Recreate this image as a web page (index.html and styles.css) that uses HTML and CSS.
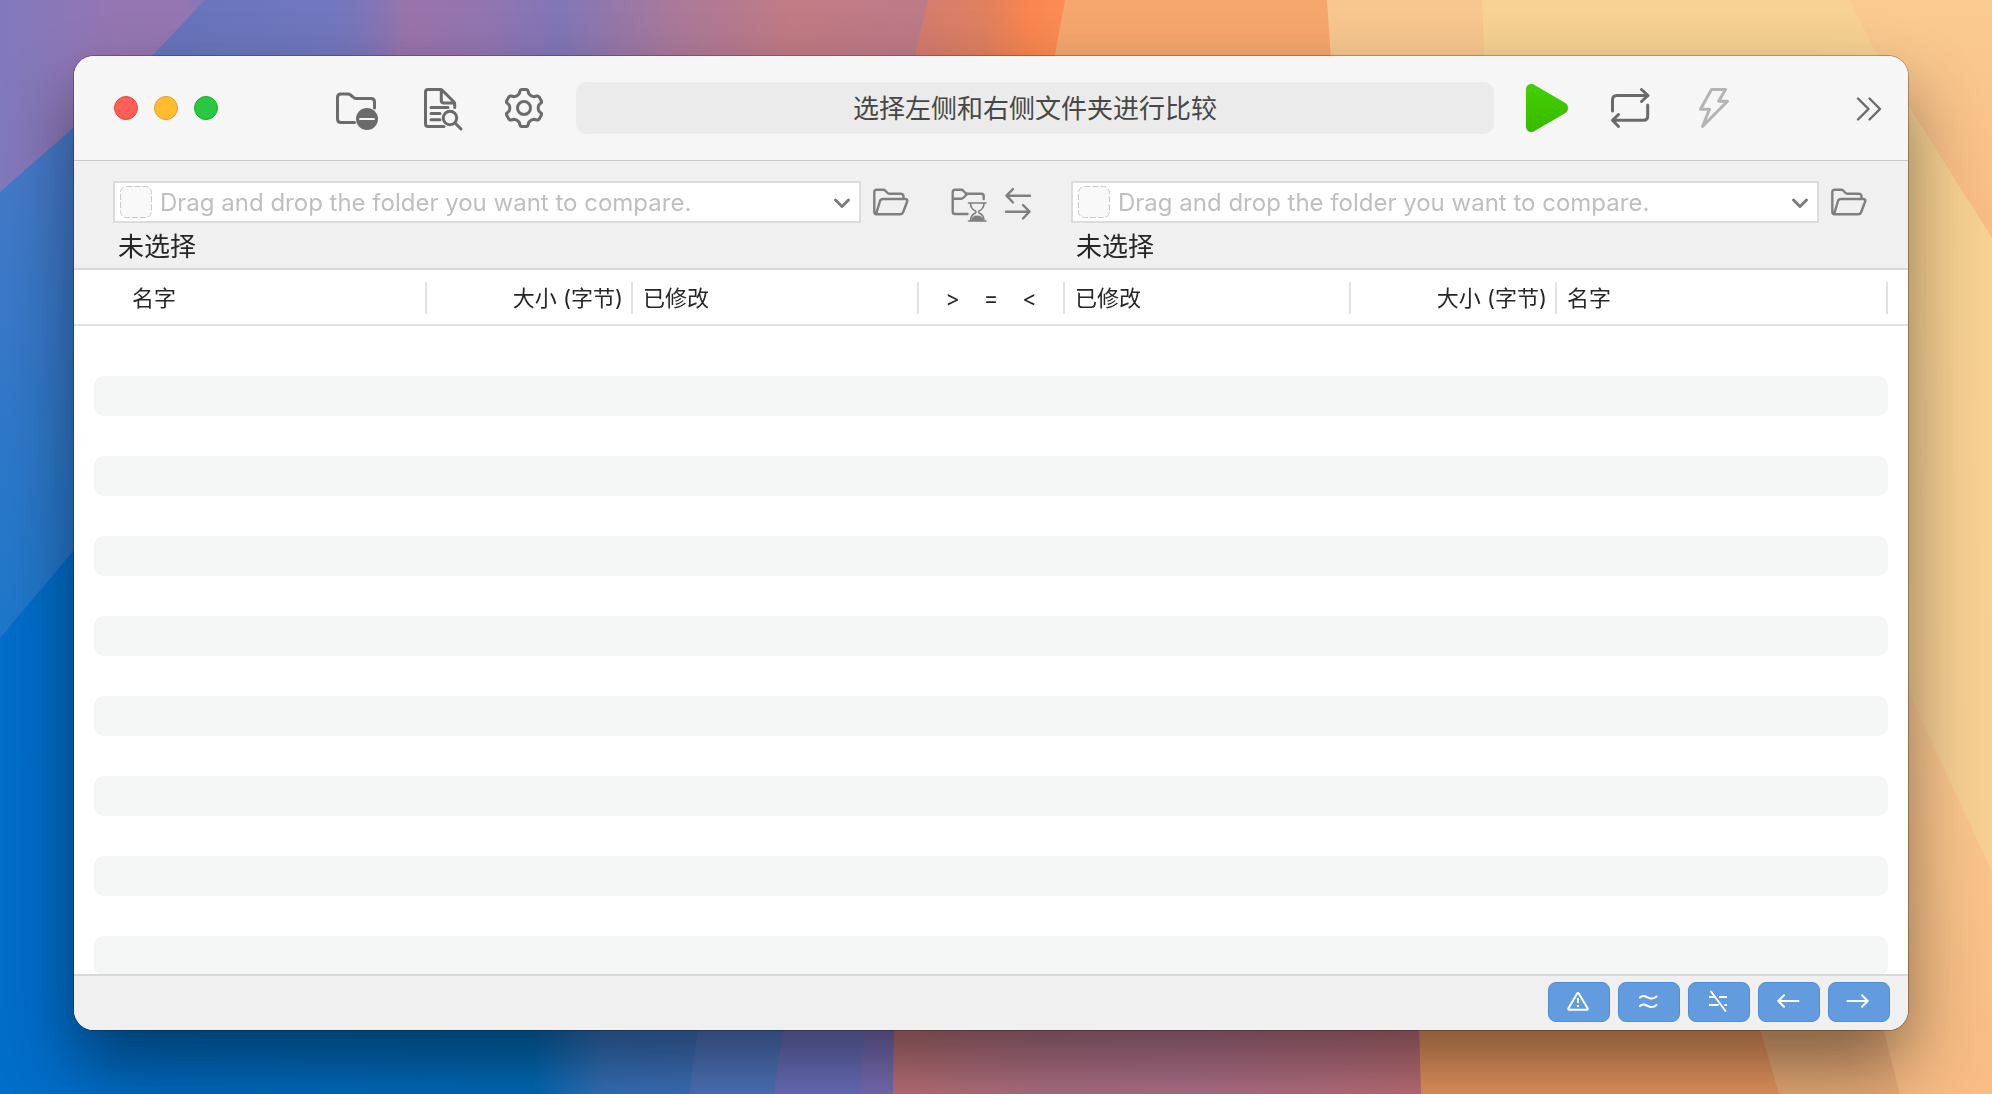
FILE: index.html
```html
<!DOCTYPE html>
<html lang="zh-CN">
<head>
<meta charset="utf-8">
<meta name="viewport" content="width=device-width, initial-scale=1">
<title>文件夹比较</title>
<link rel="stylesheet" href="styles.css">
</head>
<body>
<svg class="wallpaper" viewBox="0 0 1992 1094" preserveAspectRatio="none" aria-hidden="true">
  <defs>
    <linearGradient id="violet" gradientUnits="userSpaceOnUse" x1="0" y1="0" x2="930" y2="0">
      <stop offset="0" stop-color="#8079be"/><stop offset=".12" stop-color="#9576b2"/>
      <stop offset=".2" stop-color="#9576b2"/><stop offset=".23" stop-color="#7777bc"/><stop offset=".36" stop-color="#7b76ba"/>
      <stop offset=".44" stop-color="#9a74ab"/><stop offset=".52" stop-color="#9275b0"/>
      <stop offset=".6" stop-color="#8176b8"/><stop offset=".72" stop-color="#a9799b"/>
      <stop offset=".85" stop-color="#c17b84"/><stop offset="1" stop-color="#bd7a88"/>
    </linearGradient>
    <linearGradient id="indigo" gradientUnits="userSpaceOnUse" x1="150" y1="0" x2="400" y2="0">
      <stop offset="0" stop-color="#6674bb"/><stop offset=".7" stop-color="#7177be"/><stop offset="1" stop-color="#7177be" stop-opacity="0"/>
    </linearGradient>
    <linearGradient id="coral" gradientUnits="userSpaceOnUse" x1="910" y1="0" x2="1060" y2="0">
      <stop offset="0" stop-color="#d27b72"/><stop offset=".5" stop-color="#e0805f"/><stop offset=".8" stop-color="#fa8650"/><stop offset="1" stop-color="#fb8c55"/>
    </linearGradient>
    <linearGradient id="sky" x1="0" y1="0" x2="0" y2="1">
      <stop offset="0" stop-color="#4e7ac8"/><stop offset="1" stop-color="#1877cb"/>
    </linearGradient>
    <linearGradient id="ocean" gradientUnits="userSpaceOnUse" x1="0" y1="0" x2="900" y2="0">
      <stop offset="0" stop-color="#006ecb"/><stop offset=".59" stop-color="#006dbc"/><stop offset=".67" stop-color="#3673be"/>
      <stop offset="1" stop-color="#5270bd"/>
    </linearGradient>
    <linearGradient id="plum" gradientUnits="userSpaceOnUse" x1="890" y1="0" x2="1420" y2="0">
      <stop offset="0" stop-color="#c07378"/><stop offset=".3" stop-color="#b27389"/><stop offset=".6" stop-color="#b4738d"/><stop offset="1" stop-color="#c1717a"/>
    </linearGradient>
    <linearGradient id="sand" x1="0" y1="0" x2="0" y2="1">
      <stop offset="0" stop-color="#f7d292"/><stop offset="1" stop-color="#f8cf93"/>
    </linearGradient>
    <linearGradient id="peach" x1="0" y1="0" x2="0" y2="1">
      <stop offset="0" stop-color="#facb91"/><stop offset="1" stop-color="#f8bc84"/>
    </linearGradient>
  </defs>
  <rect width="1992" height="1094" fill="url(#violet)"/>
  <path d="M205 0H400V300H60L148 60z" fill="url(#indigo)"/>
  <path d="M0 192L74 127L150 60V700H0z" fill="url(#sky)"/>
  <path d="M0 638L74 550H900V1094H0z" fill="url(#ocean)"/>
  <path d="M702 1000H904V1094H689z" fill="#4f76c0"/>
  <path d="M787 1000H904V1094H774z" fill="#6c71bf"/>
  <path d="M866 1000H904V1094H860z" fill="#7a6fb8"/>
  <path d="M928 0H1070V547H913L914 60z" fill="url(#coral)"/>
  <path d="M901 500H1430V1094H893z" fill="url(#plum)"/>
  <path d="M1065 0H1340V600H1040L1054 60z" fill="#f6a76e"/>
  <path d="M1404 500H1790V1094H1421z" fill="#ea9860"/>
  <path d="M1327 0H1500V500H1360z" fill="#f8c78f"/>
  <path d="M1482 0H1992V900H1520z" fill="url(#sand)"/>
  <path d="M1850 0H1992V238L1908 105L1877 55z" fill="url(#peach)"/>
  <path d="M1740 960H1920V1094H1779z" fill="#eaad78"/>
  <path d="M1860 640L1908 690L1992 872V1094H1900L1876 1000z" fill="url(#peach)"/>
</svg>

<main class="window">
  <header class="toolbar">
    <div class="lights">
      <button class="light light-close" type="button" aria-label="关闭"></button>
      <button class="light light-minimize" type="button" aria-label="最小化"></button>
      <button class="light light-zoom" type="button" aria-label="缩放"></button>
    </div>
    <div class="tools">
      <button class="tool" type="button" aria-label="排除文件夹">
        <svg viewBox="0 0 48 48"><path d="M42.500 24V18Q42.500 14.500 39 14.500H24Q22.500 14.500 21 13L18.500 11Q17.300 10 16 10H9Q5.500 10 5.500 13.500V35Q5.500 38.500 9 38.500H22.500"/><circle class="solid" cx="35" cy="35" r="11"/><path class="cut" d="M28 35H42"/></svg>
      </button>
      <button class="tool" type="button" aria-label="查看报告">
        <svg viewBox="0 0 48 48"><path d="M28 42.500H12Q9.500 42.500 9.500 40V8Q9.500 5.500 12 5.500H24.500Q25.500 5.500 26.500 6.500L38 18Q38.700 18.700 38.700 20V23.500M25.300 6V16.500Q25.300 19 27.800 19H38M15 23.500H32M15 29.500H24M15 35.700H24"/><circle cx="34" cy="34" r="6.700"/><path d="M39 39L45 45"/></svg>
      </button>
      <button class="tool" type="button" aria-label="设置">
        <svg viewBox="0 0 48 48"><path transform="translate(24 24)" d="M-4-17Q-3.600-18.500-2.500-18.500H2.500Q3.600-18.500 4-17L4.800-14.300Q6.800-11.800 9.900-11.300L12.700-12Q14.300-12.300 15-11.200L17.400-7Q18-5.700 16.800-4.800L14.800-3Q13.600 0 14.800 3L16.800 4.800Q18 5.700 17.400 7L15 11.200Q14.300 12.300 12.700 12L9.900 11.300Q6.800 11.800 4.800 14.300L4 17Q3.600 18.500 2.500 18.500H-2.500Q-3.600 18.500-4 17L-4.800 14.300Q-6.800 11.800-9.900 11.300L-12.700 12Q-14.300 12.300-15 11.200L-17.400 7Q-18 5.700-16.800 4.800L-14.800 3Q-13.600 0-14.800-3L-16.800-4.800Q-18-5.700-17.400-7L-15-11.200Q-14.300-12.300-12.700-12L-9.900-11.300Q-6.800-11.800-4.800-14.300z"/><circle cx="24" cy="24" r="6.500"/></svg>
      </button>
    </div>
    <h1 class="status">选择左侧和右侧文件夹进行比较</h1>
    <div class="tools">
      <button class="tool" type="button" aria-label="开始比较">
        <svg viewBox="0 0 48 48"><defs><linearGradient id="go" x1="0" y1="0" x2="0" y2="1"><stop offset="0" stop-color="#43d000"/><stop offset="1" stop-color="#38b900"/></linearGradient></defs><path fill="url(#go)" stroke="none" d="M4 5Q4.500 0 9.500 0Q11 0 13 1.200L42.500 18.500Q46 20.500 46 24Q46 27.500 42.500 29.500L13 46.800Q11 48 9.500 48Q4.500 48 4 43z"/></svg>
      </button>
      <button class="tool" type="button" aria-label="同步">
        <svg viewBox="0 0 48 48"><path d="M6.500 27V16Q6.500 11.500 11 11.500H42M35.500 5.500L42 11.500L35.500 17.500M41.700 21V32Q41.700 36.300 37.500 36.300H6.500M12.500 30.500L6.500 36.300L12.500 42.500"/></svg>
      </button>
      <button class="tool" type="button" aria-label="停止" disabled>
        <svg viewBox="0 0 48 48"><path d="M21.500 5.500H35.500L28.700 17.200H37.500L12.500 42.500L19.500 25.300H10.500z"/></svg>
      </button>
    </div>
    <button class="tool more" type="button" aria-label="更多">
      <svg viewBox="0 0 48 48"><path d="M12 14.500L22.500 25L12 35.500M23.500 14.500L34 25L23.500 35.500"/></svg>
    </button>
  </header>

  <section class="paths">
    <div class="side">
      <div class="picker">
        <div class="combo">
          <svg class="well" viewBox="0 0 32 32" aria-hidden="true"><rect x=".5" y=".5" width="31" height="31" rx="6"/></svg>
          <input class="path" type="text" aria-label="左侧文件夹" placeholder="Drag and drop the folder you want to compare.">
          <button class="drop" type="button" aria-label="左侧最近项目"><svg viewBox="0 0 20 20"><path d="M3.500 8L10 14.500L16.500 8"/></svg></button>
        </div>
        <button class="small-tool" type="button" aria-label="打开左侧文件夹">
          <svg viewBox="0 0 40 42"><path d="M5 33.300Q3.300 33 3.300 31V11Q3.300 8.700 5.600 8.700H12Q13.500 8.700 14.500 9.800L16 11.500Q17.200 12.700 18.500 12.700H29.500Q32 12.700 32.500 15V17.500M5 33.300L9 20Q9.700 18 12 18H34Q37 18 36.200 20.500L32 31.500Q31.300 33.300 29 33.300z"/></svg>
        </button>
      </div>
      <p class="state">未选择</p>
    </div>
    <div class="between">
      <button class="small-tool" type="button" aria-label="历史记录">
        <svg viewBox="0 0 40 42"><path d="M35.700 18V15Q35.700 12.700 33.400 12.700H19.500Q17.800 12.700 16.500 11L15.300 9.700Q14.500 8.700 13 8.700H7Q4.700 8.700 4.700 11V30.700Q4.700 33 7 33H19.500M4.700 17.700H13Q14.500 17.700 15.700 16.500L19.500 12.700"/><path class="fine" d="M20.500 22H38M20.500 40H38M22.500 22Q22.500 28 27.500 30Q28.500 31 27.500 32Q22.500 34 22.500 40M36 22Q36 28 31 30Q30 31 31 32Q36 34 36 40"/><path class="fill" d="M23 40Q23.500 34.500 29.200 34.500Q35 34.500 35.500 40z"/></svg>
      </button>
      <button class="small-tool" type="button" aria-label="交换左右">
        <svg viewBox="0 0 40 42"><path d="M32 14.700H8.500M15 8L8.500 14.700L15 21.500M8 30.700H31.500M25 24L31.500 30.700L25 37.500"/></svg>
      </button>
    </div>
    <div class="side">
      <div class="picker">
        <div class="combo">
          <svg class="well" viewBox="0 0 32 32" aria-hidden="true"><rect x=".5" y=".5" width="31" height="31" rx="6"/></svg>
          <input class="path" type="text" aria-label="右侧文件夹" placeholder="Drag and drop the folder you want to compare.">
          <button class="drop" type="button" aria-label="右侧最近项目"><svg viewBox="0 0 20 20"><path d="M3.500 8L10 14.500L16.500 8"/></svg></button>
        </div>
        <button class="small-tool" type="button" aria-label="打开右侧文件夹">
          <svg viewBox="0 0 40 42"><path d="M5 33.300Q3.300 33 3.300 31V11Q3.300 8.700 5.600 8.700H12Q13.500 8.700 14.500 9.800L16 11.500Q17.200 12.700 18.500 12.700H29.500Q32 12.700 32.500 15V17.500M5 33.300L9 20Q9.700 18 12 18H34Q37 18 36.200 20.500L32 31.500Q31.300 33.300 29 33.300z"/></svg>
        </button>
      </div>
      <p class="state">未选择</p>
    </div>
  </section>

  <div class="heading">
    <table class="columns">
      <colgroup><col><col class="col-size"><col class="col-date"><col class="col-compare"><col class="col-date"><col class="col-size"><col></colgroup>
      <thead>
        <tr>
          <th scope="col"><div class="cell cell-first">名字</div></th>
          <th scope="col"><div class="cell cell-end">大小 (字节)</div></th>
          <th scope="col"><div class="cell">已修改</div></th>
          <th scope="col"><div class="cell cell-compare"><span>&gt;</span><span>=</span><span>&lt;</span></div></th>
          <th scope="col"><div class="cell">已修改</div></th>
          <th scope="col"><div class="cell cell-end">大小 (字节)</div></th>
          <th scope="col"><div class="cell">名字</div></th>
        </tr>
      </thead>
    </table>
  </div>

  <div class="rows">
    <div class="row"></div><div class="row"></div><div class="row"></div><div class="row"></div>
    <div class="row"></div><div class="row"></div><div class="row"></div><div class="row"></div>
    <div class="row"></div><div class="row"></div><div class="row"></div><div class="row"></div>
    <div class="row"></div><div class="row"></div><div class="row"></div><div class="row"></div>
  </div>

  <footer class="filters">
    <button class="filter" type="button" aria-label="显示错误"><svg viewBox="0 0 32 32"><path d="M14.200 7.500Q15 6.300 15.800 7.500L24.700 22.500Q25 23.700 24 23.700H6Q5 23.700 5.300 22.500z"/><path class="butt" d="M15 12V17M15 19V21"/></svg></button>
    <button class="filter" type="button" aria-label="显示相似"><svg viewBox="0 0 32 32"><path d="M7 11.500Q9 9.500 12 10.200Q14 11 16.500 12.200Q20 13.500 23.500 10.500M7 20Q9 18 12 18.700Q14 19.500 16.500 20.700Q20 22 23.500 19"/></svg></button>
    <button class="filter" type="button" aria-label="显示不同"><svg viewBox="0 0 32 32"><path class="butt" d="M6 11H13M16 11H24M6 19H15.500M21.500 19H24"/><path d="M8 5.500L22.500 25"/></svg></button>
    <button class="filter" type="button" aria-label="仅左侧"><svg viewBox="0 0 32 32"><path d="M25.500 15H5.500M11 9.300L5.300 15L11 20.700"/></svg></button>
    <button class="filter" type="button" aria-label="仅右侧"><svg viewBox="0 0 32 32"><path d="M4.500 15H24.500M19 9.300L24.700 15L19 20.700"/></svg></button>
  </footer>
</main>
</body>
</html>
```
FILE: styles.css
```css
* {
  box-sizing: border-box;
}

body {
  margin: 0;
  height: 100vh;
  display: flex;
  padding: 56px 84px 64px 74px;
  overflow: hidden;
  font-family: Inter, "Noto Sans CJK SC", sans-serif;
  color: #262626;
}

button {
  padding: 0;
  border: 0;
  background: none;
}

svg {
  display: block;
  fill: none;
  stroke: currentColor;
  stroke-linecap: round;
  stroke-linejoin: round;
}

.wallpaper {
  position: fixed;
  inset: 0;
  z-index: -1;
  width: 100%;
  height: 100%;
  stroke: none;
}

.window {
  flex: 1;
  min-width: 0;
  display: flex;
  flex-direction: column;
  overflow: hidden;
  border-radius: 20px;
  background: #fff;
  box-shadow: 0 0 0 1px rgba(0, 0, 0, .25), 0 36px 72px rgba(0, 0, 0, .46);
}

/* Toolbar */
.toolbar {
  display: flex;
  align-items: center;
  height: 105px;
  padding: 0 14px 0 40px;
  background: #f6f6f6;
  border-bottom: 1px solid #cacaca;
}

.lights {
  display: flex;
  gap: 16px;
  margin-right: 114px;
}

.light {
  width: 24px;
  height: 24px;
  border: 1px solid;
  border-radius: 50%;
}

.light-close {
  background: #ff5f57;
  border-color: #e2463f;
}

.light-minimize {
  background: #febc2e;
  border-color: #e0a028;
}

.light-zoom {
  background: #28c840;
  border-color: #1aab29;
}

.tools {
  display: flex;
  gap: 36px;
}

.tool {
  flex: none;
  color: #6b6b6b;
}

.tool svg {
  width: 48px;
  height: 48px;
  stroke-width: 3;
}

.tool:disabled {
  color: #b4b4b4;
}

.solid {
  fill: currentColor;
  stroke: none;
}

.cut {
  stroke: #f6f6f6;
  stroke-width: 2;
}

.status {
  flex: 1;
  margin: 0 28px;
  padding-top: 2px;
  border-radius: 10px;
  background: #ebebeb;
  color: #474747;
  font-size: 26px;
  font-weight: 400;
  line-height: 50px;
  text-align: center;
}

.more {
  margin-left: 108px;
}

.more svg {
  stroke-width: 2.4;
}

/* Folder pickers */
.paths {
  display: flex;
  height: 109px;
  padding: 20px 39px 0;
  background: #f0f0f0;
  border-bottom: 2px solid #d8d8d8;
}

.side {
  flex: 1;
  min-width: 0;
}

.picker {
  display: flex;
  gap: 10px;
}

.combo {
  flex: 1;
  min-width: 0;
  display: flex;
  align-items: center;
  height: 42px;
  padding: 0 7px 0 5px;
  background: #fff;
  border: 2px solid #dcdcdc;
}

.well {
  flex: none;
  width: 32px;
  height: 32px;
  fill: #f9f9f9;
  stroke: #c8c8c8;
  stroke-linecap: butt;
  stroke-dasharray: 6 2;
}

.path {
  flex: 1;
  min-width: 0;
  height: 36px;
  padding: 0 0 0 8px;
  border: 0;
  background: none;
  font: 24px Inter, "Noto Sans CJK SC", sans-serif;
  color: #262626;
}

.path::placeholder {
  color: #bfbfbf;
  opacity: 1;
}

.drop {
  color: #7c7c7c;
}

.drop svg {
  width: 20px;
  height: 20px;
  stroke-width: 3;
}

.small-tool {
  color: #7f7f7f;
}

.small-tool svg {
  width: 40px;
  height: 42px;
  stroke-width: 2.4;
}

.small-tool .fine {
  stroke-width: 1.6;
}

.small-tool .fill {
  fill: currentColor;
  stroke: none;
}

.between {
  display: flex;
  justify-content: center;
  align-items: flex-start;
  gap: 10px;
  width: 160px;
  padding-left: 4px;
}

.state {
  margin: 6px 0 0;
  padding-left: 5px;
  font-size: 26px;
  line-height: 36px;
}

/* Column headings */
.heading {
  height: 56px;
  padding: 12px 20px 0;
  border-bottom: 2px solid #e2e2e2;
}

.columns {
  width: 100%;
  table-layout: fixed;
  border-collapse: collapse;
}

.columns col:first-child {
  width: 333px;
}

.columns .col-size {
  width: 206px;
}

.columns .col-date {
  width: 286px;
}

.columns .col-compare {
  width: 146px;
}

.columns th {
  padding: 0;
  font-size: 22px;
  font-weight: 400;
  text-align: left;
}

.cell {
  height: 32px;
  padding: 0 10px;
  border-right: 2px solid #e2e2e2;
  line-height: 32px;
  white-space: nowrap;
}

.cell-first {
  padding-left: 38px;
}

.cell-end {
  padding-right: 8px;
  text-align: right;
}

.cell-compare {
  display: flex;
  justify-content: center;
  gap: 24px;
}

/* Comparison list */
.rows {
  flex: 1 1 0;
  min-height: 0;
  padding: 10px 20px 0;
  overflow: hidden;
}

.row {
  height: 40px;
  border-radius: 10px;
}

.row:nth-child(even) {
  background: #f4f6f5;
}

/* Filters */
.filters {
  display: flex;
  justify-content: flex-end;
  gap: 8px;
  padding: 6px 18px 8px;
  background: #f0f0f0;
  border-top: 2px solid #d8d8d8;
}

.filter {
  display: grid;
  place-items: center;
  width: 62px;
  height: 40px;
  border: 1px solid #4f8fdb;
  border-radius: 8px;
  background: #629bde;
  color: #fff;
}

.filter svg {
  width: 32px;
  height: 32px;
  stroke-width: 2;
}

.butt {
  stroke-linecap: butt;
}
```
